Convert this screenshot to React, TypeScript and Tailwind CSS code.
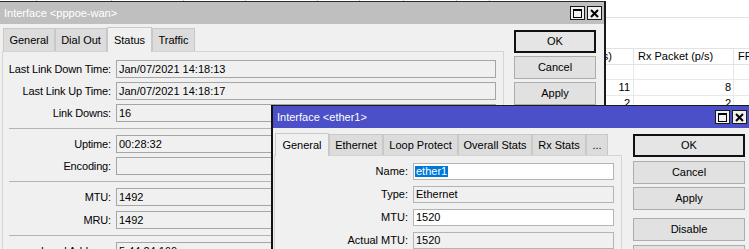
import React from "react";

const font = { fontFamily: '"Liberation Sans", Arial, sans-serif' };

function TitleButtons() {
  return (
    <div className="flex gap-[2px]">
      <div className="w-[15px] h-[14px] bg-[#f0f0f0] border border-[#1a1a1a] flex items-center justify-center">
        <svg width="9" height="9" viewBox="0 0 9 9">
          <rect x="0.5" y="0.5" width="8" height="8" fill="none" stroke="#000" />
          <rect x="0" y="0" width="9" height="2" fill="#000" />
        </svg>
      </div>
      <div className="w-[15px] h-[14px] bg-[#f0f0f0] border border-[#1a1a1a] flex items-center justify-center">
        <svg width="9" height="9" viewBox="0 0 9 9">
          <path d="M1 1 L8 8 M8 1 L1 8" stroke="#000" strokeWidth="2" />
        </svg>
      </div>
    </div>
  );
}

function Tab({ label, w, active }: { label: string; w: number; active?: boolean }) {
  return (
    <div
      style={{ width: w }}
      className={
        active
          ? "h-full shrink-0 bg-[#f0f0f0] border border-b-0 border-[#c8c8c8] flex items-center justify-center relative z-10 -mb-px"
          : "h-[calc(100%-2px)] shrink-0 bg-[#dcdcdc] border border-b-0 border-[#c8c8c8] flex items-center justify-center"
      }
    >
      {label}
    </div>
  );
}

function Btn({ label, def, className = "" }: { label: string; def?: boolean; className?: string }) {
  return (
    <div
      className={
        "h-[23px] flex items-center justify-center " +
        (def ? "border-2 border-[#111] bg-[#e5e5e5] " : "border border-[#adadad] bg-[#e1e1e1] ") +
        className
      }
    >
      {label}
    </div>
  );
}

function Field1({ label, value }: { label: string; value: string }) {
  return (
    <div className="flex items-center h-[18px]">
      <div className="w-[108px] text-right tracking-[-0.15px]">{label}</div>
      <div className="ml-[5px] w-[380px] h-full border border-[#a5a5a5] bg-[#f0f0f0] pl-[2px] flex items-center">{value}</div>
    </div>
  );
}

function Sep() {
  return <div className="ml-[6px] mr-[8px] h-px bg-[#b4b4b4] my-[6px]" />;
}

function PppoeWindow() {
  return (
    <div className="absolute left-0 top-[1px] w-[606px] h-[260px] bg-[#f0f0f0] border-t border-t-[#2a2a2a] border-r-2 border-r-[#1a1a1a]">
      <div className="h-[22px] bg-[#bfbfbf] flex items-center justify-between pl-[4px] pr-[2px] text-white">
        <span>Interface &lt;pppoe-wan&gt;</span>
        <TitleButtons />
      </div>
      <div className="flex">
        <div className="w-[502px] ml-[2px] pt-[2px]">
          <div className="h-[25px] flex items-end ml-[1px]">
            <Tab label="General" w={52} />
            <Tab label="Dial Out" w={52} />
            <Tab label="Status" w={45} active />
            <Tab label="Traffic" w={43} />
          </div>
          <div className="border border-[#d4d4d4] bg-[#f0f0f0] pt-[8px] h-[200px]">
            <div className="flex flex-col gap-[4px]">
              <Field1 label="Last Link Down Time:" value="Jan/07/2021 14:18:13" />
              <Field1 label="Last Link Up Time:" value="Jan/07/2021 14:18:17" />
              <Field1 label="Link Downs:" value="16" />
            </div>
            <Sep />
            <div className="flex flex-col gap-[4px]">
              <Field1 label="Uptime:" value="00:28:32" />
              <Field1 label="Encoding:" value="" />
            </div>
            <Sep />
            <div className="flex flex-col gap-[5px]">
              <Field1 label="MTU:" value="1492" />
              <Field1 label="MRU:" value="1492" />
            </div>
            <Sep />
            <Field1 label="Local Address:" value="5.44.24.160" />
          </div>
        </div>
        <div className="ml-[10px] pt-[6px] w-[82px] flex flex-col gap-[3px]">
          <Btn label="OK" def />
          <Btn label="Cancel" />
          <Btn label="Apply" />
        </div>
      </div>
    </div>
  );
}

function Field2({ label, value, editable, selected }: { label: string; value: string; editable?: boolean; selected?: boolean }) {
  return (
    <div className="flex items-center h-[17px]">
      <div className="w-[133px] text-right">{label}</div>
      <div
        className={
          "ml-[5px] w-[201px] h-full border pl-[1px] flex items-center " +
          (editable ? "bg-white border-[#b4b4b4]" : "bg-[#f0f0f0] border-[#b4b4b4]")
        }
      >
        {selected ? <span className="bg-[#0078d7] text-white px-px">{value}</span> : <span className="px-px">{value}</span>}
      </div>
    </div>
  );
}

function Ether1Window() {
  return (
    <div className="absolute left-[271px] top-[105px] w-[490px] h-[160px] bg-[#f0f0f0] border-t border-t-[#1a1a1a] border-l-2 border-l-[#111] z-20">
      <div className="h-[22px] bg-[#4b4fc8] flex items-center justify-between pl-[4px] text-white">
        <span>Interface &lt;ether1&gt;</span>
        <div className="mr-[14px]">
          <TitleButtons />
        </div>
      </div>
      <div className="flex">
        <div className="w-[348px] ml-[1px] pt-[4px]">
          <div className="h-[23px] flex items-end ml-[1px]">
            <Tab label="General" w={54} active />
            <Tab label="Ethernet" w={54} />
            <Tab label="Loop Protect" w={75} />
            <Tab label="Overall Stats" w={74} />
            <Tab label="Rx Stats" w={54} />
            <Tab label="..." w={22} />
          </div>
          <div className="border border-[#d4d4d4] bg-[#f0f0f0] pt-[7px] h-[120px] flex flex-col gap-[6px]">
            <Field2 label="Name:" value="ether1" editable selected />
            <Field2 label="Type:" value="Ethernet" />
            <Field2 label="MTU:" value="1520" editable />
            <Field2 label="Actual MTU:" value="1520" />
          </div>
        </div>
        <div className="ml-[11px] pt-[6px] w-[112px] flex flex-col">
          <Btn label="OK" def />
          <Btn label="Cancel" className="mt-[4px]" />
          <Btn label="Apply" className="mt-[3px]" />
          <Btn label="Disable" className="mt-[8px]" />
          <Btn label="" className="mt-[4px]" />
        </div>
      </div>
    </div>
  );
}

function Background() {
  const top = [37, 75, 72, 62, 72, 42, 44, 53, 33];
  return (
    <div className="absolute inset-0 bg-white">
      <div className="flex h-[2px]">
        {top.map((w, i) => (
          <div key={i} style={{ width: w }} className="h-full shrink-0 border-r border-[#c8c8c8]" />
        ))}
      </div>
      <div className="h-[16px] border-b border-[#e2e2e2]" />
      <div className="h-[30px]" />
      <div className="ml-[534px] w-[300px]">
        <div className="flex h-[17px] border-y border-[#e2e2e2]">
          <div className="w-[100px] shrink-0 border-r border-[#e2e2e2] pl-[4px] flex items-center whitespace-nowrap">Tx Packet (p/s)</div>
          <div className="w-[100px] shrink-0 border-r border-[#e2e2e2] pl-[4px] flex items-center whitespace-nowrap">Rx Packet (p/s)</div>
          <div className="w-[60px] shrink-0 pl-[4px] flex items-center whitespace-nowrap">FP Tx</div>
        </div>
        <div className="flex h-[15px] border-b border-[#e8e8e8]">
          <div className="w-[100px] shrink-0 border-r border-[#e8e8e8]" />
          <div className="w-[100px] shrink-0 border-r border-[#e8e8e8]" />
        </div>
        {[["11", "8"], ["2", "2"]].map((r, i) => (
          <div key={i} className="flex h-[16px] border-b border-[#e8e8e8]">
            <div className="w-[100px] shrink-0 border-r border-[#e8e8e8] pr-[3px] flex items-center justify-end">{r[0]}</div>
            <div className="w-[100px] shrink-0 border-r border-[#e8e8e8] pr-[2px] flex items-center justify-end">{r[1]}</div>
          </div>
        ))}
      </div>
    </div>
  );
}

export default function App() {
  return (
    <div style={font} className="relative w-[749px] h-[249px] overflow-hidden text-[11px] text-black leading-none">
      <Background />
      <PppoeWindow />
      <Ether1Window />
    </div>
  );
}
